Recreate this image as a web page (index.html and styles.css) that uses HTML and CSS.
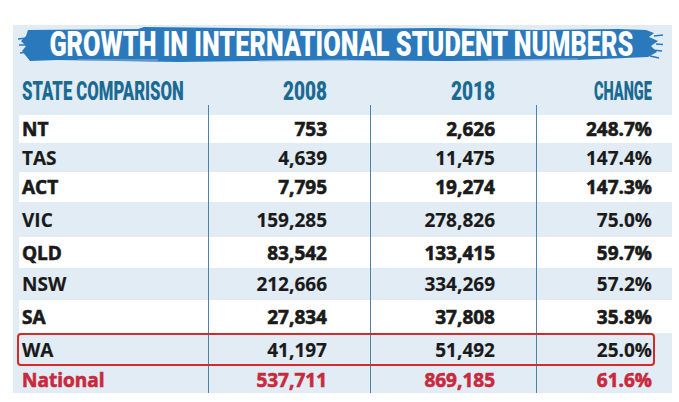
FILE: index.html
```html
<!DOCTYPE html>
<html>
<head>
<meta charset="utf-8">
<link rel="stylesheet" href="styles.css">
</head>
<body>
<div class="panel">
  <div class="title">
    <svg class="brush" viewBox="0 0 645 36" width="645" height="36">
      <path fill="#2b79bd" d="M10,3 L120,2 L126,0 L300,2 L420,1 L520,3 L600,2 L628,3 L636,6 L631,10 L640,14 L633,19 L639,25 L630,30 L560,33 L430,34 L300,33 L160,35 L40,33 L12,34 L8,29 L4,24 L8,19 L3,14 L8,9 Z"/>
      <path stroke="#2b79bd" stroke-width="1.5" fill="none" d="M0,12 L9,11 M1,18 L8,18 M2,26 L10,25 M636,9 L646,8 M638,17 L650,18 M634,23 L644,24 M632,29 L641,31"/>
      <path stroke="#8fb6d8" stroke-width="1" fill="none" d="M60,33 L140,33 M240,34 L330,33 M470,33 L560,32"/>
    </svg>
    <div class="title-text"><span>GROWTH IN INTERNATIONAL STUDENT NUMBERS</span></div>
  </div>

  <div class="row head">
    <div class="c l"><span class="hd hl">STATE COMPARISON</span></div>
    <div class="c r p1"><span class="hd hn">2008</span></div>
    <div class="c r p2"><span class="hd hn">2018</span></div>
    <div class="c r p3"><span class="hd hc">CHANGE</span></div>
  </div>
  <div class="row gap">
    <div></div><div class="v"></div><div class="v"></div><div class="v"></div>
  </div>

  <div class="row white strong h28">
    <div class="c l">NT</div><div class="c r p1 v">753</div><div class="c r p2 v">2,626</div><div class="c r p3 v">248.7%</div>
  </div>
  <div class="row blue light h29">
    <div class="c l">TAS</div><div class="c r p1 v">4,639</div><div class="c r p2 v">11,475</div><div class="c r p3 v">147.4%</div>
  </div>
  <div class="row white strong h30">
    <div class="c l">ACT</div><div class="c r p1 v">7,795</div><div class="c r p2 v">19,274</div><div class="c r p3 v">147.3%</div>
  </div>
  <div class="row blue light h35">
    <div class="c l">VIC</div><div class="c r p1 v">159,285</div><div class="c r p2 v">278,826</div><div class="c r p3 v">75.0%</div>
  </div>
  <div class="row white strong h31">
    <div class="c l">QLD</div><div class="c r p1 v">83,542</div><div class="c r p2 v">133,415</div><div class="c r p3 v">59.7%</div>
  </div>
  <div class="row blue light h32">
    <div class="c l">NSW</div><div class="c r p1 v">212,666</div><div class="c r p2 v">334,269</div><div class="c r p3 v">57.2%</div>
  </div>
  <div class="row white strong h33">
    <div class="c l">SA</div><div class="c r p1 v">27,834</div><div class="c r p2 v">37,808</div><div class="c r p3 v">35.8%</div>
  </div>
  <div class="row blue light h33 highlight">
    <div class="c l">WA</div><div class="c r p1 v">41,197</div><div class="c r p2 v">51,492</div><div class="c r p3 v">25.0%</div>
  </div>
  <div class="row blue strong national h27">
    <div class="c l">National</div><div class="c r p1 v">537,711</div><div class="c r p2 v">869,185</div><div class="c r p3 v">61.6%</div>
  </div>
</div>
</body>
</html>
```

FILE: styles.css
```css
html, body {
  margin: 0;
  padding: 0;
  background: #ffffff;
}

body {
  width: 679px;
  height: 402px;
  overflow: hidden;
}

.panel {
  margin: 25px 0 0 13px;
  width: 659px;
  height: 368px;
  background: #e1ecf4;
  display: flex;
  flex-direction: column;
}

.title {
  margin: 2px 0 0 5px;
  width: 645px;
  height: 36px;
  display: grid;
  overflow: visible;
}

.brush {
  grid-area: 1 / 1;
  display: block;
}

.title-text {
  grid-area: 1 / 1;
  display: flex;
  justify-content: center;
  align-items: center;
  padding-left: 2px;
  white-space: nowrap;
  min-width: 0;
}

.title-text span {
  flex-shrink: 0;
  display: inline-block;
  font-family: Roboto, "Liberation Sans", sans-serif;
  font-weight: 900;
  font-size: 35px;
  line-height: 36px;
  color: #ffffff;
  transform: scaleX(0.722);
  transform-origin: center;
}

.row {
  margin-left: 6px;
  display: grid;
  grid-template-columns: 189px 162px 166px 136px;
  font-family: "Open Sans", "Noto Sans", "Liberation Sans", sans-serif;
  font-size: 19px;
  color: #1a1a1a;
  position: relative;
}

.c {
  display: flex;
  align-items: center;
  white-space: nowrap;
}

.l {
  padding-left: 3px;
}

.r {
  justify-content: flex-end;
}

.p1 { padding-right: 43px; }
.p2 { padding-right: 41px; }
.p3 { padding-right: 20px; }

.v {
  border-left: 1.5px solid #4b84a8;
}

.head {
  height: 42px;
}

.head .c {
  align-items: flex-end;
  padding-bottom: 1px;
}

.hd {
  flex-shrink: 0;
  display: inline-block;
  font-family: Roboto, "Liberation Sans", sans-serif;
  font-weight: 900;
  font-size: 25px;
  line-height: 25px;
  color: #1b6a93;
}

.hl {
  transform: scaleX(0.667);
  transform-origin: left;
}

.hn {
  transform: scaleX(0.76);
  transform-origin: right;
}

.hc {
  transform: scaleX(0.58);
  transform-origin: right;
}

.gap {
  height: 10px;
}

.white { background: #ffffff; }
.blue { background: #e1ecf4; }

.strong {
  font-weight: 700;
  -webkit-text-stroke: 0.6px currentColor;
}

.light {
  font-weight: 700;
  -webkit-text-stroke: 0.15px currentColor;
}

.national { color: #c8293c; }

.h27 { height: 27px; }
.h28 { height: 28px; }
.h29 { height: 29px; }
.h30 { height: 30px; }
.h31 { height: 31px; }
.h32 { height: 32px; }
.h33 { height: 33px; }
.h35 { height: 35px; }

.highlight::after {
  content: "";
  position: absolute;
  left: -2px;
  right: 17px;
  top: 0;
  bottom: 0;
  border: 2px solid #d42a2a;
  border-radius: 4px;
  pointer-events: none;
}
```
